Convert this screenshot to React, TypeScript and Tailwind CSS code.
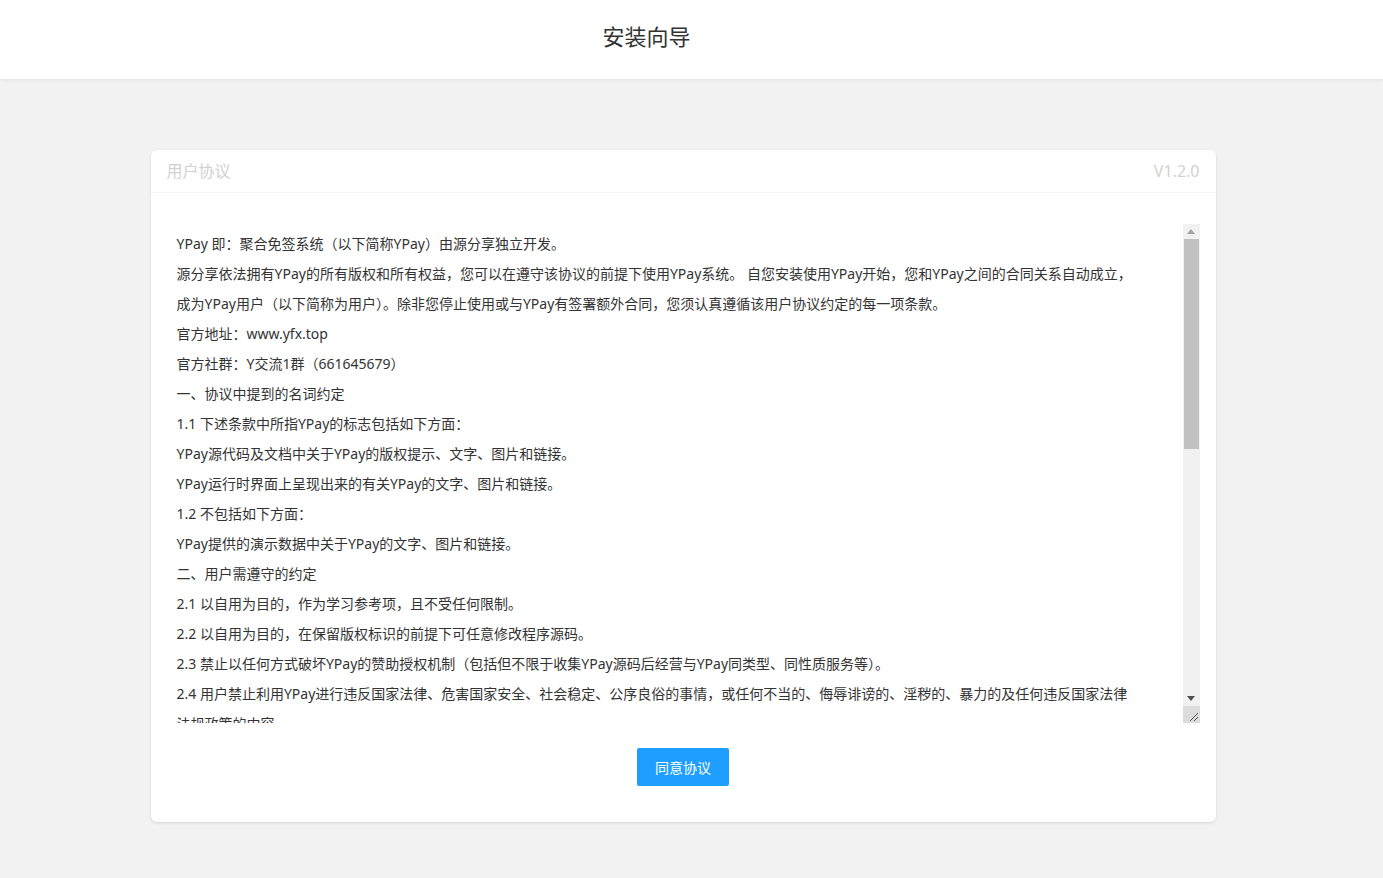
import React from 'react';

const agreement = [
  'YPay 即：聚合免签系统（以下简称YPay）由源分享独立开发。',
  '源分享依法拥有YPay的所有版权和所有权益，您可以在遵守该协议的前提下使用YPay系统。 自您安装使用YPay开始，您和YPay之间的合同关系自动成立，',
  '成为YPay用户（以下简称为用户）。除非您停止使用或与YPay有签署额外合同，您须认真遵循该用户协议约定的每一项条款。',
  '官方地址：www.yfx.top',
  '官方社群：Y交流1群（661645679）',
  '一、协议中提到的名词约定',
  '1.1 下述条款中所指YPay的标志包括如下方面：',
  'YPay源代码及文档中关于YPay的版权提示、文字、图片和链接。',
  'YPay运行时界面上呈现出来的有关YPay的文字、图片和链接。',
  '1.2 不包括如下方面：',
  'YPay提供的演示数据中关于YPay的文字、图片和链接。',
  '二、用户需遵守的约定',
  '2.1 以自用为目的，作为学习参考项，且不受任何限制。',
  '2.2 以自用为目的，在保留版权标识的前提下可任意修改程序源码。',
  '2.3 禁止以任何方式破坏YPay的赞助授权机制（包括但不限于收集YPay源码后经营与YPay同类型、同性质服务等）。',
  '2.4 用户禁止利用YPay进行违反国家法律、危害国家安全、社会稳定、公序良俗的事情，或任何不当的、侮辱诽谤的、淫秽的、暴力的及任何违反国家法律',
  '法规政策的内容。',
  '2.5 用户不得将YPay用于任何违法违规的收款用途。',
  '三、免责声明',
  '3.1 YPay为免费开源程序，用户出于自愿而使用本软件，您必须了解使用本软件的风险。',
  '3.2 在尚未购买产品技术服务之前，我们不承诺提供任何形式的技术支持、使用担保。',
  '3.3 源分享不对使用本软件构建的网站中的内容承担责任。',
  '3.4 因使用YPay所产生的一切后果，由用户自行承担。',
  '四、协议的生效与终止',
  '4.1 本协议自用户安装YPay之日起生效。',
  '4.2 如用户违反本协议的任何条款，源分享有权终止本协议。',
  '4.3 协议终止后，用户须立即删除YPay的全部副本。',
  '五、其他',
  '5.1 本协议的解释权归源分享所有。',
  '5.2 源分享有权随时修改本协议，修改后的协议将在官方网站公布。',
  '5.3 如您不同意本协议的任何内容，请立即停止使用YPay。',
  '5.4 点击“同意协议”即表示您已阅读并同意本协议的全部条款。',
];

// fake classic scrollbar, the native one is overlay in the headless browser
const ScrollBar: React.FC = () => (
  <div className="w-[17px] shrink-0 flex flex-col bg-[#f1f1f1]">
    <div className="h-[15px] flex items-center justify-center">
      <svg width="8" height="5" viewBox="0 0 8 5">
        <polygon points="4,0 8,5 0,5" fill="#a3a3a3" />
      </svg>
    </div>
    <div className="flex-1 flex flex-col px-[1px]">
      <div className="h-[210px] bg-[#c1c1c1]" />
    </div>
    <div className="h-[16px] flex items-center justify-center">
      <svg width="8" height="5" viewBox="0 0 8 5">
        <polygon points="0,0 8,0 4,5" fill="#505050" />
      </svg>
    </div>
    <div className="h-[17px] bg-[#dcdcdc] flex items-end justify-end p-[2px]">
      <svg width="9" height="9" viewBox="0 0 9 9">
        <line x1="1" y1="9" x2="9" y2="1" stroke="#555" strokeWidth="1" />
        <line x1="5" y1="9" x2="9" y2="5" stroke="#555" strokeWidth="1" />
      </svg>
    </div>
  </div>
);

export default function App() {
  return (
    <div
      className="min-h-screen bg-[#f2f2f2] text-[#333]"
      style={{ fontFamily: '"Noto Sans", "Noto Sans CJK SC", sans-serif' }}
    >
      <header className="h-[79px] bg-white shadow-[0_1px_4px_rgba(0,0,0,0.08)] flex items-center justify-center">
        <h1 className="text-[22px] text-[#333] ml-[-90px] pb-[7px]">安装向导</h1>
      </header>

      <main className="pt-[71px] pb-[56px] pr-[17px]">
        <div className="mx-auto w-[1065px] bg-white rounded-[6px] shadow-[0_1px_3px_rgba(0,0,0,0.12)]">
          <div className="h-[43px] px-[16px] flex items-center justify-between border-b border-[#f6f6f6] text-[16px] text-[#d2d2d2]">
            <span>用户协议</span>
            <span>V1.2.0</span>
          </div>
          <div className="px-[16px] pt-[31px] pb-[36px]">
            <div className="flex h-[499px] bg-white">
              <div className="flex-1 overflow-hidden pl-[10px] pr-[40px] pt-[5px] text-[14px] leading-[30px] text-[#333]">
                {agreement.map((line, i) => (
                  <p key={i} className="whitespace-nowrap">
                    {line}
                  </p>
                ))}
              </div>
              <ScrollBar />
            </div>
            <div className="flex justify-center mt-[25px]">
              <button className="h-[38px] px-[18px] bg-[#1e9fff] text-white text-[14px] rounded-[2px]">
                同意协议
              </button>
            </div>
          </div>
        </div>
      </main>
    </div>
  );
}
